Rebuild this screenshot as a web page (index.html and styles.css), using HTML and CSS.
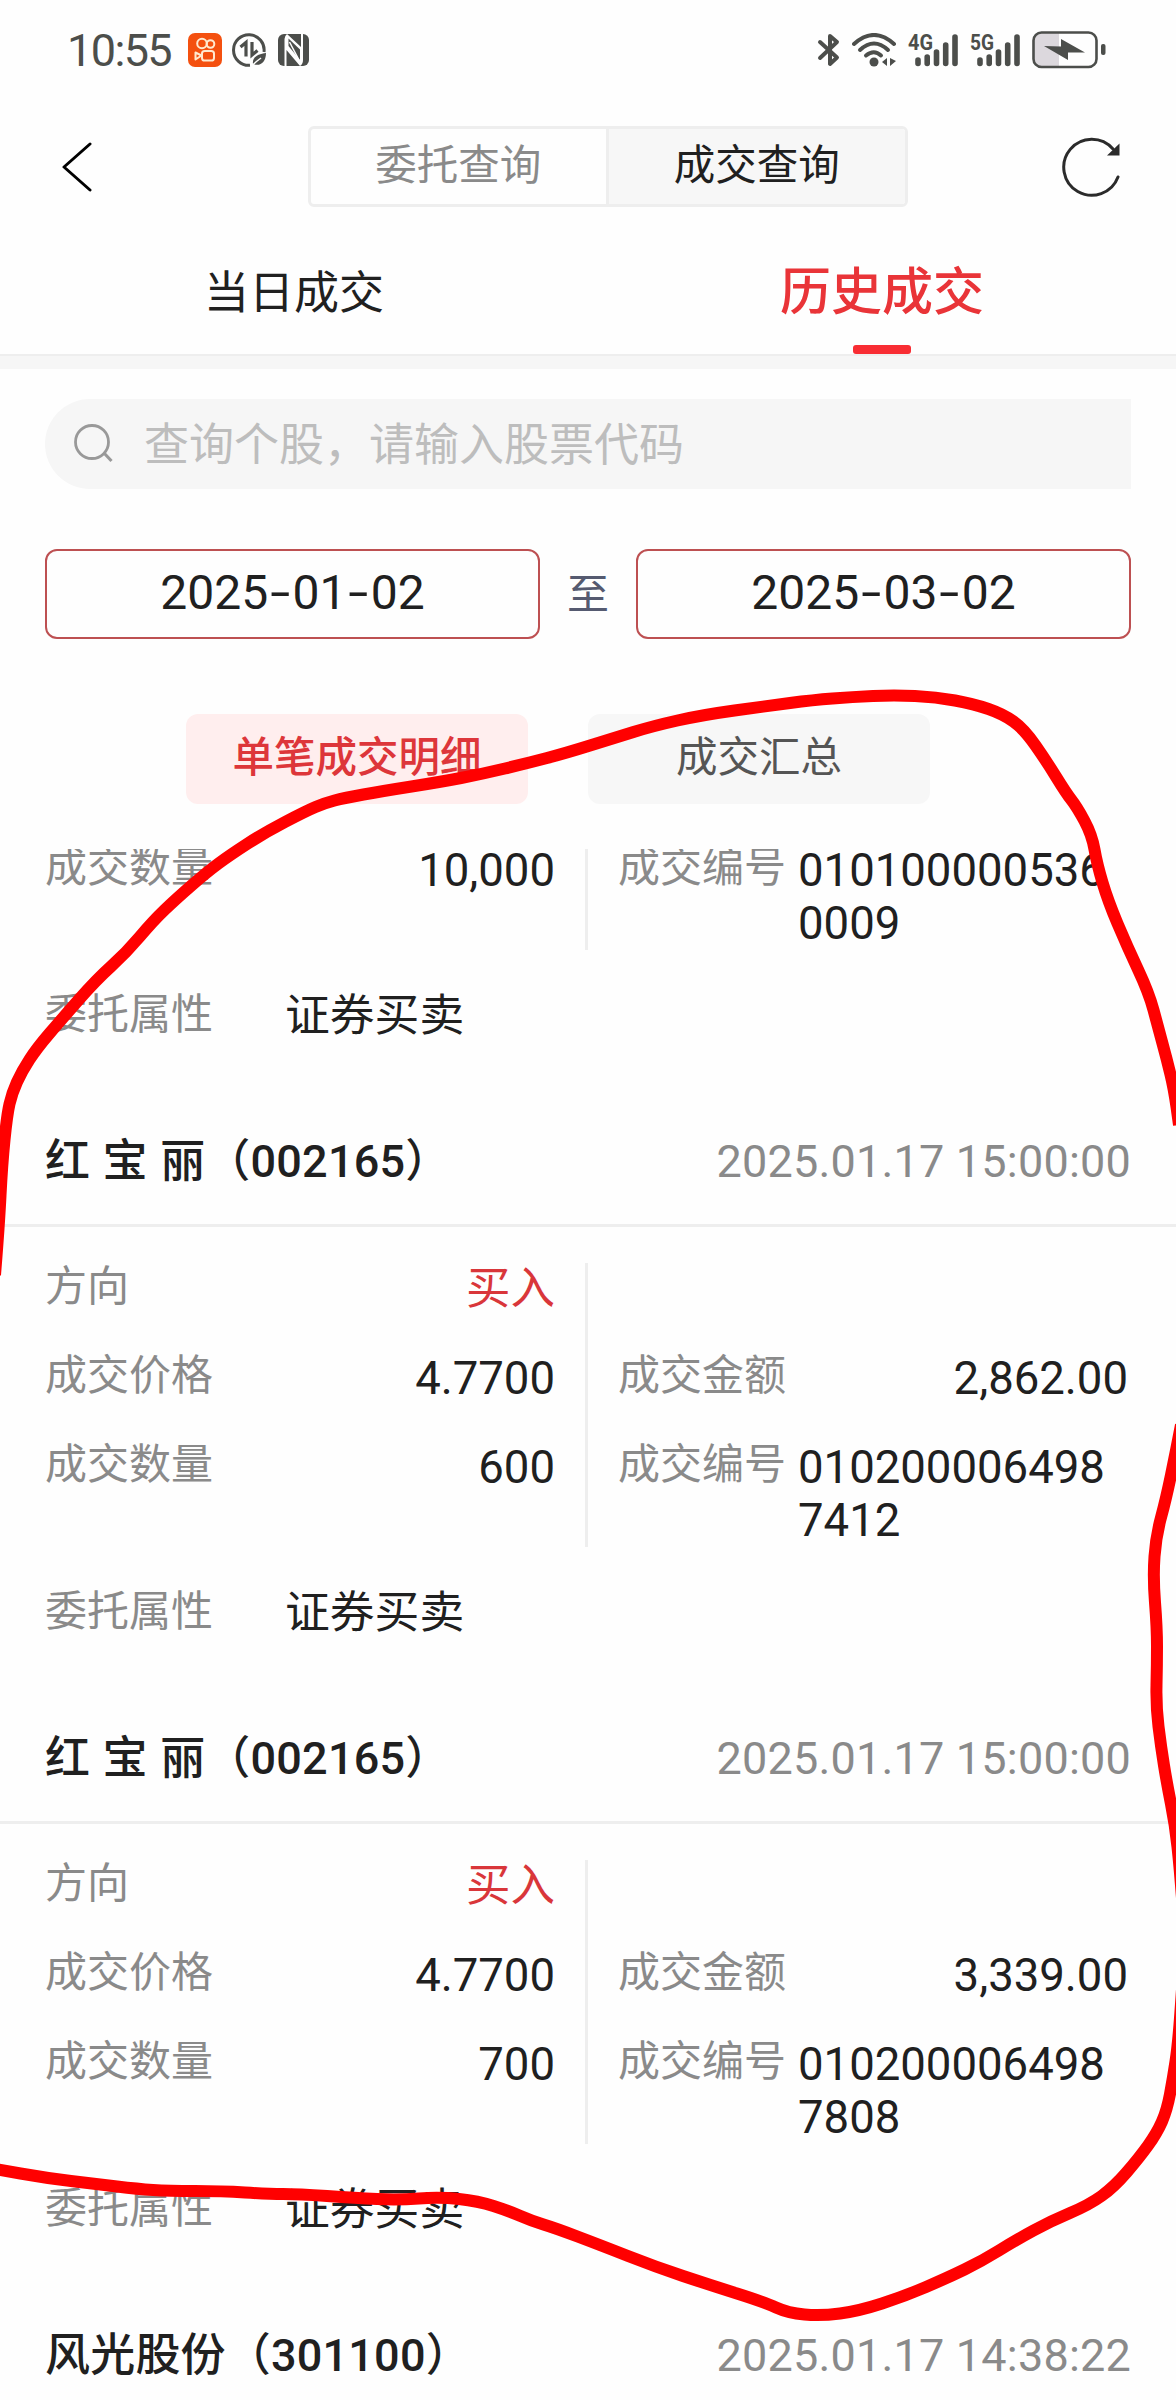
FILE: index.html
```html
<!DOCTYPE html>
<html lang="zh-CN">
<head>
  <meta charset="UTF-8">
  <meta name="viewport" content="width=device-width, initial-scale=1">
  <title>成交查询</title>
  <link rel="stylesheet" href="styles.css">
</head>
<body>
  <div class="page">
    <div class="status-bar">
      <div class="status-left">
        <span class="clock">10:55</span>
        <svg class="app-icon" width="34" height="34" viewBox="0 0 34 34">
          <rect width="34" height="34" rx="7" fill="#f4500f"/>
          <g fill="none" stroke="#ffe9cf" stroke-width="2">
            <circle cx="14" cy="10.5" r="4.8"/>
            <circle cx="22.5" cy="11" r="3.8"/>
            <rect x="14" y="18" width="12" height="9.5" rx="2.6"/>
            <path d="M13.500 22.500 L7.500 19.500 V26.500 Z" stroke-linejoin="round"/>
          </g>
        </svg>
        <svg class="data-icon" width="34" height="34" viewBox="0 0 34 34">
          <path d="M32 19 A15.300 15.300 0 1 0 18 32.300" fill="none" stroke="#4c4e4b" stroke-width="3"/>
          <path d="M8.500 14 L14 9.500 V23.500 M20 9 V22 L25.500 17.500" fill="none" stroke="#4c4e4b" stroke-width="3.200"/>
          <path d="M34 20 C26 21 20 24 21 31 C28 34 34 29 34 20 Z" fill="#4c4e4b"/>
          <path d="M19 34 C22 30 25 28 29 25" fill="none" stroke="#fefefe" stroke-width="1.500"/>
        </svg>
        <svg class="nfc-icon" width="31" height="32" viewBox="0 0 31 32">
          <rect width="31" height="32" rx="6" fill="#4c4e4b"/>
          <path d="M6.500 32 V5 Q6.500 2 9 0 L23 13 V0 H25 V26 Q25 30 22 32 L8.500 16 V32 Z" fill="#fefefe"/>
          <path d="M10.500 4.500 L22 15.500 V26 L10.500 12 Z" fill="#4c4e4b"/>
          <path d="M11.500 8 L21.500 27" fill="none" stroke="#fefefe" stroke-width="1.500"/>
        </svg>
      </div>
      <div class="status-right">
        <svg class="bluetooth" width="24" height="36" viewBox="0 0 24 36">
          <path d="M3 10 L20 25.500 L13 32 V4 L20 10 L3 26" fill="none" stroke="#4c4e4b" stroke-width="4" stroke-linecap="round" stroke-linejoin="round"/>
        </svg>
        <svg class="wifi" width="44" height="34" viewBox="0 0 44 34">
          <g fill="none" stroke="#4c4e4b" stroke-width="4" stroke-linecap="round">
            <path d="M2 11 Q22 -7 42 11"/>
            <path d="M8 17 Q22 4 36 17"/>
            <path d="M14 22.500 Q22 16 29 22.500"/>
          </g>
          <circle cx="22" cy="29" r="4.500" fill="#4c4e4b"/>
          <path d="M30 29 L35 25 V33 Z M38 25 V33 L44 28 Z" fill="#4c4e4b"/>
        </svg>
        <svg class="signal" width="51" height="36" viewBox="0 0 51 36">
          <text class="signal-type" x="0" y="18" textLength="25" lengthAdjust="spacingAndGlyphs">4G</text>
          <path d="M10 28 V31.500 M19.200 25 V31.500 M28.500 20 V31.500 M37.700 13 V31.500 M47 5 V31.500" fill="none" stroke="#4c4e4b" stroke-width="5.600" stroke-linecap="round"/>
        </svg>
        <svg class="signal" width="51" height="36" viewBox="0 0 51 36">
          <text class="signal-type" x="0" y="18" textLength="24" lengthAdjust="spacingAndGlyphs">5G</text>
          <path d="M10 28 V31.500 M19.200 25 V31.500 M28.500 20 V31.500 M37.700 13 V31.500 M47 5 V31.500" fill="none" stroke="#4c4e4b" stroke-width="5.600" stroke-linecap="round"/>
        </svg>
        <svg class="battery" width="74" height="38" viewBox="0 0 74 38">
          <path d="M27 2 H10 Q2 2 2 10 V28 Q2 36 10 36 H27 Z" fill="#dcd8dd"/>
          <rect x="1.500" y="1.500" width="63" height="34.500" rx="8" fill="none" stroke="#4c4e4b" stroke-width="2.600"/>
          <path d="M12 15 L29 15.500 V8 L53 21.500 H36 V29 Z" fill="#4c4e4b"/>
          <rect x="69" y="13" width="4.500" height="11" rx="2" fill="#4c4e4b"/>
        </svg>
      </div>
    </div>

    <div class="nav">
      <svg class="back" width="31" height="50" viewBox="0 0 31 50">
        <path d="M28 2 L2 25 L28 48" fill="none" stroke="#000" stroke-width="3" stroke-linecap="round" stroke-linejoin="round"/>
      </svg>
      <div class="segment">
        <div class="segment-item">委托查询</div>
        <div class="segment-item active">成交查询</div>
      </div>
      <svg class="refresh" width="60" height="60" viewBox="0 0 60 60">
        <path d="M56 40 A28 28 0 1 1 51 12" fill="none" stroke="#2b2b2b" stroke-width="3" stroke-linecap="round"/>
        <path d="M45 18.500 L57.500 6.500 V18.500 Z" fill="#2b2b2b"/>
      </svg>
    </div>

    <div class="tabs">
      <div class="tab">当日成交</div>
      <div class="tab active">历史成交</div>
    </div>
    <div class="gap-bar"></div>

    <div class="search">
      <svg class="search-icon" width="42" height="42" viewBox="0 0 42 42">
        <circle cx="19" cy="19" r="16.500" fill="none" stroke="#999" stroke-width="2.800"/>
        <path d="M31 30 L38.500 38" stroke="#999" stroke-width="3"/>
      </svg>
      <span class="placeholder">查询个股，请输入股票代码</span>
    </div>

    <div class="date-range">
      <div class="date">2025<i>-</i>01<i>-</i>02</div>
      <span class="to">至</span>
      <div class="date">2025<i>-</i>03<i>-</i>02</div>
    </div>

    <div class="modes">
      <div class="mode active">单笔成交明细</div>
      <div class="mode">成交汇总</div>
    </div>

    <div class="list">
      <div class="record scrolled">
        <div class="detail">
          <div class="col">
            <div class="row"><span class="label">成交数量</span><span class="value">10,000</span></div>
          </div>
          <div class="col right">
            <div class="row"><span class="label">成交编号</span><span class="value serial">0101000005360009</span></div>
          </div>
        </div>
        <div class="attr"><span class="label">委托属性</span><span class="value">证券买卖</span></div>
      </div>

      <div class="record">
        <div class="record-head"><span class="stock">红 宝 丽（002165）</span><span class="time">2025.01.17 15:00:00</span></div>
        <div class="detail">
          <div class="col">
            <div class="row"><span class="label">方向</span><span class="value buy">买入</span></div>
            <div class="row"><span class="label">成交价格</span><span class="value">4.7700</span></div>
            <div class="row"><span class="label">成交数量</span><span class="value">600</span></div>
          </div>
          <div class="col right">
            <div class="row"></div>
            <div class="row"><span class="label">成交金额</span><span class="value">2,862.00</span></div>
            <div class="row"><span class="label">成交编号</span><span class="value serial">0102000064987412</span></div>
          </div>
        </div>
        <div class="attr"><span class="label">委托属性</span><span class="value">证券买卖</span></div>
      </div>

      <div class="record">
        <div class="record-head"><span class="stock">红 宝 丽（002165）</span><span class="time">2025.01.17 15:00:00</span></div>
        <div class="detail">
          <div class="col">
            <div class="row"><span class="label">方向</span><span class="value buy">买入</span></div>
            <div class="row"><span class="label">成交价格</span><span class="value">4.7700</span></div>
            <div class="row"><span class="label">成交数量</span><span class="value">700</span></div>
          </div>
          <div class="col right">
            <div class="row"></div>
            <div class="row"><span class="label">成交金额</span><span class="value">3,339.00</span></div>
            <div class="row"><span class="label">成交编号</span><span class="value serial">0102000064987808</span></div>
          </div>
        </div>
        <div class="attr"><span class="label">委托属性</span><span class="value">证券买卖</span></div>
      </div>

      <div class="record">
        <div class="record-head"><span class="stock">风光股份（301100）</span><span class="time">2025.01.17 14:38:22</span></div>
      </div>
    </div>

    <!-- hand-drawn marker line over the records -->
    <svg class="marker" width="1176" height="2400" viewBox="0 0 1176 2400">
      <path data-points="-5,1275 -1,1226 2,1165 7,1115 12,1093 22,1071 37,1048 61,1020 96,980 126,953 153,921 176,899 207,872 230,855 264,833 306,811 325,803 344,798 383,791 440,782 482,774 528,763 566,753 614,738 653,726 702,715 767,706 813,700 852,697 894,695 936,697 974,704 1003,714 1024,729 1047,762 1066,793 1077,807 1092,835 1097,864 1108,901 1127,946 1149,993 1158,1027 1167,1060 1174,1089 1179,1125"/>
      <path data-points="1181,1425 1176,1451 1166,1499 1156,1536 1153,1577 1157,1628 1157,1665 1156,1706 1161,1747 1167,1784 1175,1824 1180,1870 1185,1940 1182,1991 1178,2045 1173,2078 1167,2110 1157,2133 1139,2158 1114,2187 1089,2205 1051,2221 1016,2240 982,2261 947,2278 905,2296 859,2311 821,2316 788,2313 764,2302 710,2285 656,2267 600,2245 555,2228 532,2221 509,2211 478,2201 440,2197 398,2200 356,2198 298,2194 268,2194 222,2191 168,2191 138,2189 96,2184 46,2178 -5,2169"/>
    </svg>
  </div>

  <script>
    // Round the marker corners: each point becomes the control of a curve
    // that runs between the midpoints of its two segments.
    document.querySelectorAll('.marker path').forEach(path => {
      const pts = path.dataset.points.split(' ').map(p => p.split(',').map(Number));
      let d = 'M' + pts[0];
      for (let i = 1; i < pts.length - 1; i++) {
        const midX = (pts[i][0] + pts[i + 1][0]) / 2;
        const midY = (pts[i][1] + pts[i + 1][1]) / 2;
        d += ' Q' + pts[i] + ' ' + midX + ',' + midY;
      }
      d += ' L' + pts[pts.length - 1];
      path.setAttribute('d', d);
    });
  </script>
</body>
</html>
```
FILE: styles.css
```css
* {
  box-sizing: border-box;
}
body {
  margin: 0;
  background: #fefefe;
  font-family: Roboto, "Noto Sans CJK SC", sans-serif;
  font-size: 45px;
  color: #202020;
}
.page {
  position: relative;
  width: 1176px;
  height: 2400px;
  overflow: hidden;
  display: flex;
  flex-direction: column;
}

/* status bar */
.status-bar {
  height: 100px;
  padding: 0 70px 0 67px;
  display: flex;
  justify-content: space-between;
  align-items: center;
}
.status-left,
.status-right {
  display: flex;
  align-items: center;
}
.clock {
  width: 121px;
  font-size: 45px;
  letter-spacing: -1.6px;
  color: #4c4e4b;
}
.data-icon {
  margin-left: 10px;
}
.nfc-icon {
  margin-left: 12px;
}
.wifi {
  margin-left: 11px;
}
.signal {
  margin-left: 12px;
  overflow: visible;
}
.signal + .signal {
  margin-left: 11px;
}
.signal-type {
  font-size: 22px;
  font-weight: 700;
  fill: #4c4e4b;
}
.battery {
  margin-left: 11px;
}

/* navigation */
.nav {
  height: 134px;
  padding: 0 54px 0 62px;
  display: flex;
  justify-content: space-between;
  align-items: center;
}
.segment {
  width: 600px;
  height: 81px;
  margin-left: 60px;
  margin-bottom: 1px;
  display: flex;
  border: 3px solid #eee;
  border-radius: 6px;
  overflow: hidden;
}
.segment-item {
  flex: 1;
  line-height: 73px;
  text-align: center;
  font-size: 41.5px;
  color: #8a8a8a;
}
.segment-item.active {
  background: #f7f7f7;
  border-left: 3px solid #eee;
  color: #202020;
}

/* tabs */
.tabs {
  display: flex;
  height: 120px;
}
.tab {
  flex: 1;
  display: flex;
  flex-direction: column;
  align-items: center;
  line-height: 120px;
}
.tab.active {
  font-size: 51px;
  font-weight: 500;
  line-height: 117px;
  color: #e93438;
}
.tab.active::after {
  content: "";
  width: 58px;
  height: 9px;
  margin-top: -6px;
  border-radius: 3px;
  background: #f82d33;
}
.gap-bar {
  height: 15px;
  background: #f6f6f6;
  border-top: 2px solid #eee;
}

/* search */
.search {
  height: 90px;
  margin: 30px 45px 0;
  padding-left: 28px;
  display: flex;
  align-items: center;
  background: #f6f6f6;
  border-radius: 45px 0 0 45px;
}
.placeholder {
  margin-left: 29px;
  padding-bottom: 6px;
  color: #bdbdbd;
}

/* date range */
.date-range {
  margin: 60px 45px 0;
  display: flex;
  justify-content: space-between;
  align-items: center;
}
.date {
  width: 495px;
  height: 90px;
  border: 2px solid #bd5052;
  border-radius: 12px;
  line-height: 84px;
  text-align: center;
  font-size: 48px;
}
.date i {
  display: inline-block;
  font-style: normal;
  padding: 0 5.5px;
  transform: scaleX(1.5);
}
.to {
  padding-bottom: 8px;
  font-size: 42px;
  color: #555a70;
}

/* mode switch */
.modes {
  margin-top: 75px;
  display: flex;
  justify-content: center;
  gap: 60px;
  padding-right: 60px;
}
.mode {
  width: 342px;
  height: 90px;
  border-radius: 12px;
  background: #f7f7f7;
  line-height: 87px;
  text-align: center;
  font-size: 41.5px;
  color: #555;
}
.mode.active {
  background: #ffeeee;
  font-weight: 500;
  color: #dd363a;
}

/* records */
.list {
  margin-top: 45px;
  flex: 1;
  overflow: hidden;
}
.record-head {
  height: 127px;
  padding: 0 45px;
  display: flex;
  justify-content: space-between;
  line-height: 124px;
  border-bottom: 3px solid #eee;
}
.stock {
  font-weight: 500;
  letter-spacing: 0.2px;
  word-spacing: 1px;
}
.time {
  letter-spacing: 0.2px;
  color: #8a8a8a;
}
.detail {
  display: flex;
  margin: 36px 48px 0 45px;
}
.scrolled .detail {
  margin-top: -5px;
}
.col {
  width: 543px;
  padding-right: 30px;
  display: flex;
  flex-direction: column;
  gap: 36px;
  border-right: 3px solid #eee;
}
.col.right {
  width: 540px;
  padding: 0 0 0 30px;
  border-right: none;
}
.row {
  display: flex;
  justify-content: space-between;
  min-height: 53px;
  line-height: 53px;
}
.label {
  font-size: 42px;
  line-height: 47px;
  color: #8a8a8a;
}
.value {
  font-size: 45.5px;
}
.value.buy {
  font-size: 44.5px;
  color: #d9363a;
}
.value.serial {
  width: 330px;
  padding-right: 10px;
  word-break: break-all;
}
.attr {
  display: flex;
  align-items: center;
  gap: 72px;
  height: 53px;
  margin: 38px 45px 59px;
}
.attr .value {
  padding-bottom: 6px;
  font-size: 44.8px;
}

.marker {
  position: absolute;
  left: 0;
  top: 0;
  fill: none;
  stroke: #ff0000;
  stroke-width: 12;
}
```
